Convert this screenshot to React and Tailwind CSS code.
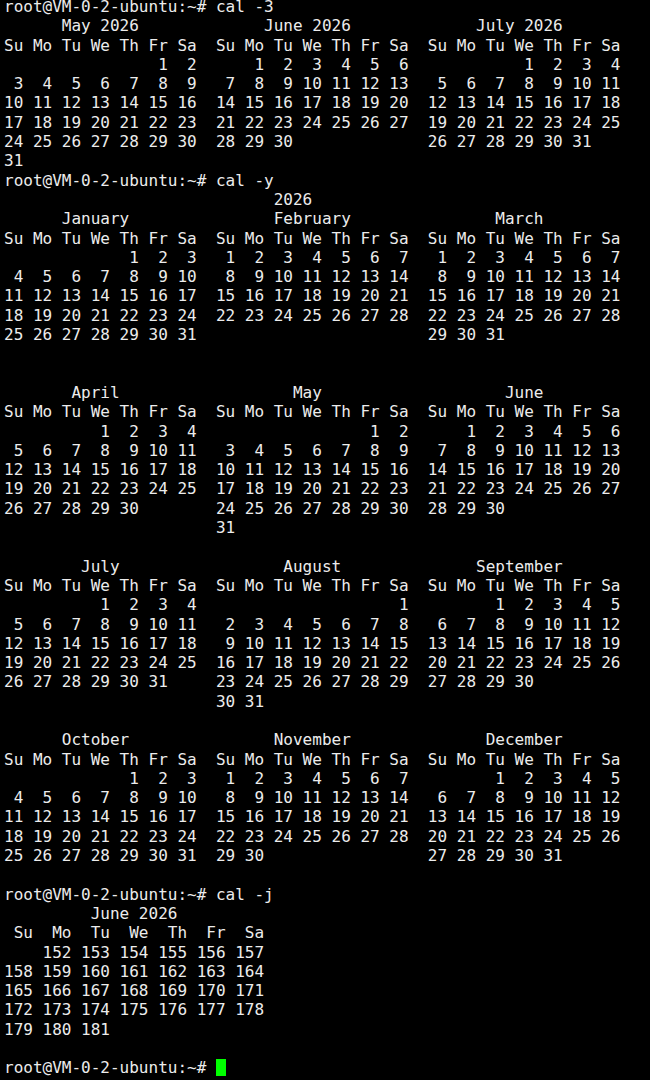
import React from 'react';

const PROMPT = 'root@VM-0-2-ubuntu:~# ';
const MONTHS = ['January', 'February', 'March', 'April', 'May', 'June', 'July', 'August', 'September', 'October', 'November', 'December'];

const center = (text, width) => {
    const left = Math.floor((width - text.length) / 2);
    return (' '.repeat(left) + text).padEnd(width, ' ');
};

// builds header + weekday row + 6 week rows for one month, like util-linux cal
const monthBlock = (year, month, title, julian = false) => {
    const cell = julian ? 4 : 3;
    const width = cell * 7 - 1;
    const first = new Date(year, month, 1).getDay();
    const days = new Date(year, month + 1, 0).getDate();
    const startOfYear = new Date(year, 0, 1);
    const lines = [center(title, width)];
    const names = ['Su', 'Mo', 'Tu', 'We', 'Th', 'Fr', 'Sa'];
    lines.push(names.map(n => n.padStart(cell - 1, ' ')).join(' '));
    const cells = Array(first).fill('').concat(
        Array.from({ length: days }, (_, i) => {
            if (!julian) return String(i + 1);
            const d = new Date(year, month, i + 1);
            return String(Math.round((d - startOfYear) / 86400000) + 1);
        })
    );
    for (let w = 0; w < 6; w++) {
        const row = cells.slice(w * 7, w * 7 + 7);
        while (row.length < 7) row.push('');
        lines.push(row.map(c => c.padStart(cell - 1, ' ')).join(' '));
    }
    return lines;
};

const joinBlocks = (blocks) =>
    blocks[0].map((_, i) => blocks.map(b => b[i]).join('  ').replace(/\s+$/, ''));

const buildScreen = () => {
    const out = [];
    out.push(PROMPT + 'cal -3');
    out.push(...joinBlocks([
        monthBlock(2026, 4, 'May 2026'),
        monthBlock(2026, 5, 'June 2026'),
        monthBlock(2026, 6, 'July 2026'),
    ]));
    out.push(PROMPT + 'cal -y');
    out.push(' '.repeat(28) + '2026');
    for (let q = 0; q < 4; q++) {
        out.push(...joinBlocks([0, 1, 2].map(k => monthBlock(2026, q * 3 + k, MONTHS[q * 3 + k]))));
        if (q < 3) out.push('');
    }
    out.push(PROMPT + 'cal -j');
    out.push(...monthBlock(2026, 5, 'June 2026', true).map(l => l.replace(/\s+$/, '')));
    return out;
};

const App = () => {
    const lines = buildScreen();

    return (
        <div className="w-[650px] h-[1080px] bg-black overflow-hidden">
            <pre className="mt-[-3px] pl-[4px] text-[16px] leading-[19.31px] text-[#ececec] whitespace-pre" style={{ fontFamily: '"DejaVu Sans Mono", monospace' }}>
                {lines.map((line, i) => (
                    <div key={i} className="h-[19.31px]">{line || ' '}</div>
                ))}
                <div className="h-[19.31px] flex items-start">
                    <span>{PROMPT}</span>
                    <span className="inline-block w-[10px] h-[17px] mt-[1px] bg-[#00ff00]"></span>
                </div>
            </pre>
        </div>
    );
};

export default App;
